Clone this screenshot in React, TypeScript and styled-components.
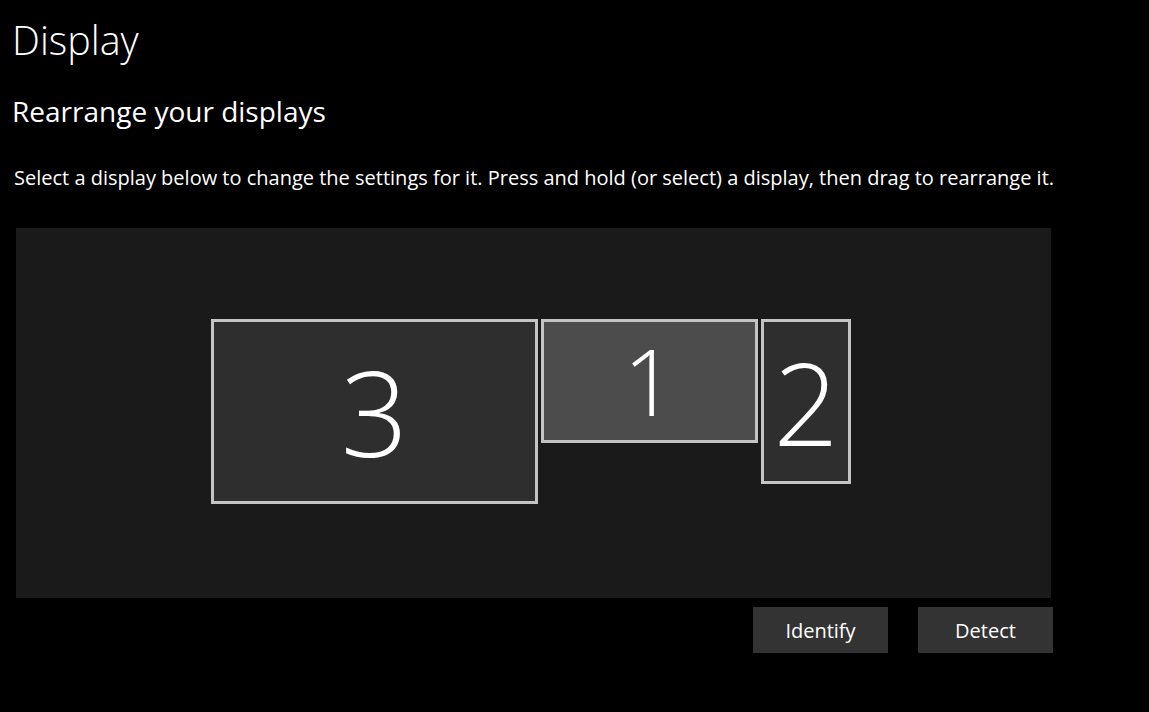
import React from "react";
import styled, { createGlobalStyle } from "styled-components";

const Global = createGlobalStyle`
  html, body { margin: 0; padding: 0; background: #000; }
  body { font-family: "Open Sans", "Noto Sans", "Liberation Sans", sans-serif; color: #fff; }
`;

const Page = styled.div`
  width: 1149px;
  height: 712px;
  box-sizing: border-box;
  padding: 14px 0 0 12px;
  display: flex;
  flex-direction: column;
  overflow: hidden;
`;

const Title = styled.h1`
  margin: 0;
  font-size: 39.5px;
  font-weight: 300;
  line-height: 52px;
  letter-spacing: 0;
`;

const Subtitle = styled.h2`
  margin: 27px 0 0 0;
  font-size: 28px;
  font-weight: 400;
  line-height: 36px;
`;

const Description = styled.p`
  margin: 35px 0 0 2px;
  font-size: 20px;
  font-weight: 400;
  line-height: 28px;
`;

const Arrangement = styled.div`
  position: relative;
  margin: 36px 0 0 4px;
  width: 1035px;
  height: 370px;
  background: #1a1a1a;
`;

const Monitor = styled.div<{ $x: number; $y: number; $w: number; $h: number; $active?: boolean; $size: number }>`
  position: absolute;
  left: ${(p) => p.$x}px;
  top: ${(p) => p.$y}px;
  width: ${(p) => p.$w}px;
  height: ${(p) => p.$h}px;
  box-sizing: border-box;
  border: 3px solid #c4c4c4;
  background: ${(p) => (p.$active ? "#4c4c4c" : "#2e2e2e")};
  display: flex;
  align-items: center;
  justify-content: center;
  font-size: ${(p) => p.$size}px;
  font-weight: 300;
  line-height: 1;
  color: #fff;
`;

const Actions = styled.div`
  display: flex;
  gap: 30px;
  margin: 9px 0 0 741px;
`;

const Button = styled.button`
  width: 135px;
  height: 46px;
  border: none;
  background: #333333;
  color: #fff;
  font-family: "Open Sans", "Noto Sans", "Liberation Sans", sans-serif;
  font-size: 20px;
  padding: 0;
  cursor: pointer;
`;

const monitors = [
  { id: 3, x: 195, y: 91, w: 327, h: 185, size: 118 },
  { id: 1, x: 525, y: 91, w: 217, h: 124, size: 92, active: true },
  { id: 2, x: 745, y: 91, w: 90, h: 165, size: 114 },
];

export default function App() {
  return (
    <>
      <Global />
      <Page>
        <Title>Display</Title>
        <Subtitle>Rearrange your displays</Subtitle>
        <Description>
          Select a display below to change the settings for it. Press and hold (or select) a display, then drag to rearrange it.
        </Description>
        <Arrangement>
          {monitors.map((m) => (
            <Monitor key={m.id} $x={m.x} $y={m.y} $w={m.w} $h={m.h} $size={m.size} $active={m.active}>
              {m.id}
            </Monitor>
          ))}
        </Arrangement>
        <Actions>
          <Button>Identify</Button>
          <Button>Detect</Button>
        </Actions>
      </Page>
    </>
  );
}
